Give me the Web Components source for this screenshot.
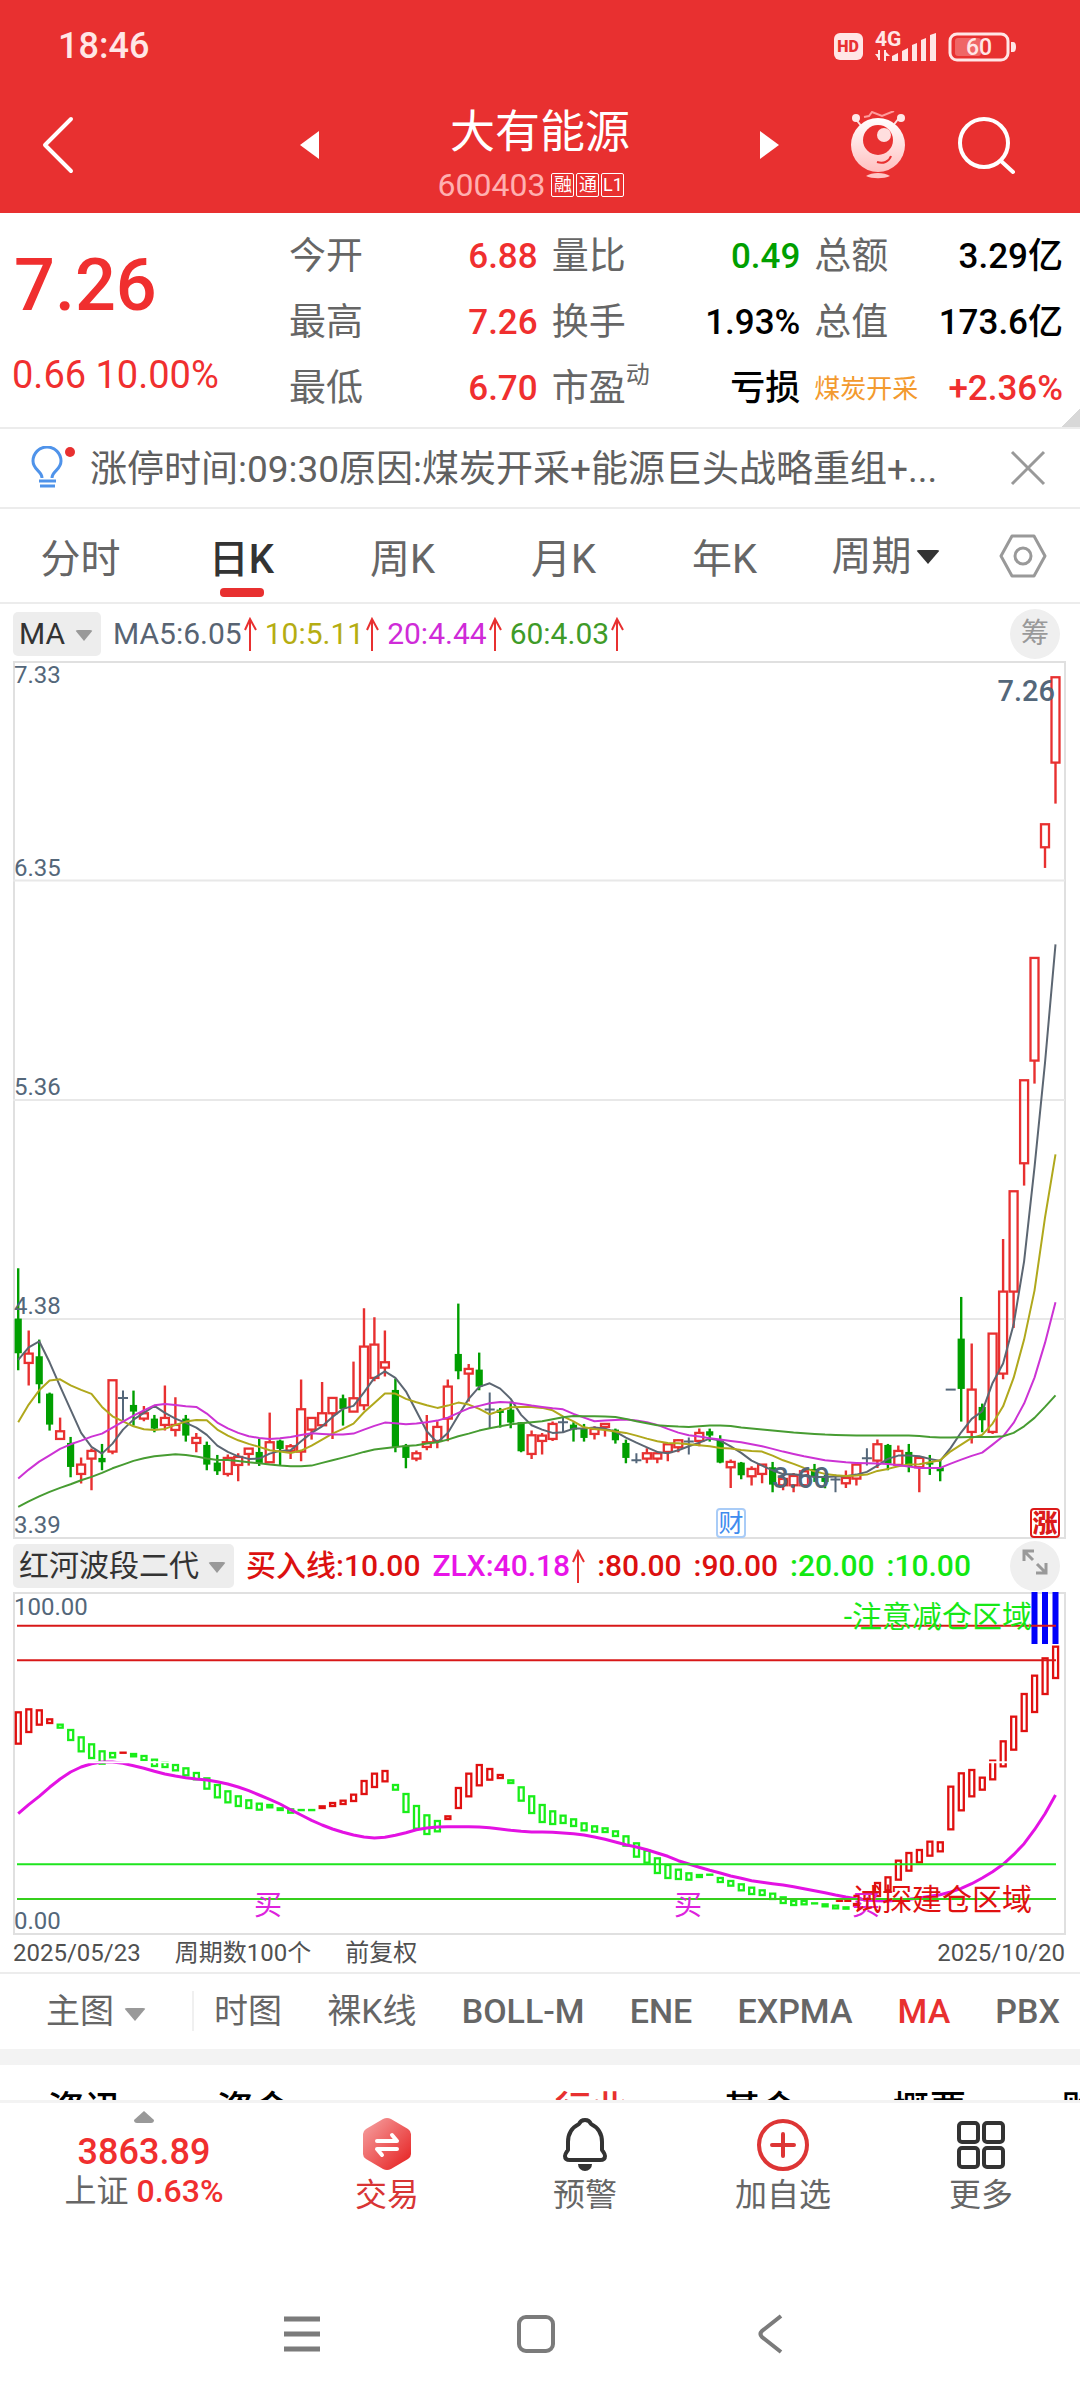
<!DOCTYPE html>
<html lang="zh-CN">
<head>
<meta charset="utf-8">
<meta name="viewport" content="width=device-width, initial-scale=1">
<title>大有能源 600403</title>
<style>
  :root {
    --red: #e83030;
    --up: #f02f2f;
    --down: #009f00;
    --ink: #333;
    --muted: #666;
    --faint: #999;
    --line: #ececec;
  }
  body {
    margin: 0;
    background: #fff;
    color: var(--ink);
    font-family: Roboto, "Noto Sans CJK SC", sans-serif;
  }
</style>
</head>
<body>
<stock-app></stock-app>

<template id="statusBar">
  <style>
    :host { display: flex; align-items: center; justify-content: space-between; height: 92px; padding: 0 64px 0 58px; color: #ffe6e6; }
    time { font-size: 36px; line-height: 40px; font-weight: 500; }
    svg { display: block; }
  </style>
  <time>18:46</time>
  <svg width="184" height="36" viewBox="0 0 184 36" fill="#ffe6e6" font-family="Roboto, sans-serif">
    <rect x="2" y="5" width="29" height="27" rx="6"/>
    <text x="16" y="24" text-anchor="middle" font-size="16" font-weight="900" fill="#e83030">HD</text>
    <text x="43" y="18" font-size="21" font-weight="700">4G</text>
    <path d="M46 32V22h2v10zM43 26h3v4zM52 22h2v11h-2zM54 24l4 4h-4zM60 33v-5l6-3v8zM70 33V23l6-3v13zM80 33V17l5-2v18zM89 33V12l5-2v23zM98 33V7l6-2v28z"/>
    <rect x="118" y="6" width="58" height="26" rx="7" fill="none" stroke="#ffe6e6" stroke-width="3"/>
    <rect x="123" y="10" width="26" height="18" rx="3" opacity=".3"/>
    <path d="M179 14h2q3 0 3 5t-3 5h-2z"/>
    <text x="147" y="27" text-anchor="middle" font-size="23" font-weight="500">60</text>
  </svg>
</template>

<template id="titleBar">
  <style>
    :host { display: grid; grid-template-columns: minmax(0, 5fr) minmax(0, 8fr) minmax(0, 5fr); align-items: center; height: 121px; color: #fff; }
    button { background: none; border: 0; padding: 0; color: inherit; cursor: pointer; }
    svg { display: block; }
    .back { justify-self: start; margin-top: -16px; margin-left: 42px; }
    .middle { display: flex; align-items: center; justify-content: space-between; }
    .middle > button { margin-top: -16px; }
    .name { text-align: center; }
    h1 { margin: 0 0 8px; font-size: 45px; line-height: 56px; font-weight: 400; }
    p { display: flex; align-items: center; justify-content: center; gap: 2px; margin: 0; padding-right: 18px; font-size: 32px; line-height: 32px; color: #ffb0b0; }
    i { box-sizing: border-box; width: 23px; height: 24px; border: 1px solid #fff; border-radius: 2px; color: #fff; font-size: 18px; line-height: 22px; font-style: normal; }
    i:first-of-type { margin-left: 4px; }
    .tools { display: flex; justify-content: flex-end; gap: 51px; padding-right: 65px; margin-top: -16px; }
  </style>
  <button class="back" aria-label="返回"><svg width="32" height="58" fill="none" stroke="#fff" stroke-width="4" stroke-linecap="round" stroke-linejoin="round"><path d="M29 3 3 29l26 26"/></svg></button>
  <div class="middle">
    <button aria-label="上一只"><svg width="20" height="28" fill="#fff"><path d="M19 0v28L0 14z"/></svg></button>
    <div class="name">
      <h1>大有能源</h1>
      <p>600403<i>融</i><i>通</i><i>L1</i></p>
    </div>
    <button aria-label="下一只"><svg width="20" height="28" fill="#fff"><path d="M0 0v28l19-14z"/></svg></button>
  </div>
  <div class="tools">
    <button aria-label="助手">
      <svg width="56" height="68" viewBox="0 0 56 68">
        <defs><linearGradient id="face" x1="0" y1="0" x2="0" y2="1"><stop stop-color="#fff"/><stop offset="1" stop-color="#ffc0c0"/></linearGradient></defs>
        <path d="m5 7 7 9M49 7l-7 9" stroke="#ffdede" stroke-width="2"/>
        <path d="m14 6 5-1 3-4 10 4 12-5" fill="none" stroke="#ff9c9c" stroke-width="2"/>
        <circle cx="6" cy="7" r="4" fill="#ffe8e8"/><circle cx="51" cy="7" r="4" fill="#ffe8e8"/>
        <circle cx="28" cy="34" r="27" fill="url(#face)"/>
        <circle cx="28" cy="29" r="15" fill="#e83030"/>
        <circle cx="34" cy="24" r="7" fill="#ffdede"/>
        <path d="M27 51c6 2 12 0 14-6" fill="none" stroke="#e83030" stroke-width="2"/>
        <path d="M16 65c6-4 18-4 24 0-6 3-18 3-24 0z" fill="#ffc6c6"/>
      </svg>
    </button>
    <button aria-label="搜索"><svg width="58" height="60" fill="none" stroke="#fff" stroke-width="4" stroke-linecap="round"><circle cx="27" cy="28" r="24"/><path d="m44 46 12 11"/></svg></button>
  </div>
</template>

<template id="quoteItem">
  <style>
    :host { display: flex; align-items: center; justify-content: space-between; line-height: 66px; white-space: nowrap; color: #000; }
    dt { font-size: 37px; color: var(--muted); }
    dd { margin: 0; font-size: 35px; font-weight: 500; }
    :host([tone="up"]) dd { color: var(--up); }
    :host([tone="down"]) dd { color: var(--down); }
    :host([tag]) dt { font-size: 26px; color: #f39a2e; }
    ::slotted(sup) { font-size: 24px; line-height: 24px; vertical-align: 18px; }
    dl { display: contents; }
  </style>
  <dl><dt><slot name="label"></slot></dt><dd><slot></slot></dd></dl>
</template>

<template id="quotePanel">
  <style>
    :host { display: grid; grid-template-columns: 261px repeat(3, minmax(0, 1fr)); column-gap: 14px; padding: 11px 17px 5px 14px; border-bottom: 2px solid var(--line);
      background: linear-gradient(135deg, transparent 50%, #d8d8d8 50%) right bottom / 18px 18px no-repeat; }
    .price { grid-row: span 3; color: var(--up); }
    b { display: block; padding-top: 20px; font-size: 72px; line-height: 84px; font-weight: 500; }
    p { margin: 27px 0 0 -2px; font-size: 38px; line-height: 40px; }
  </style>
  <div class="price"><b>7.26</b><p>0.66 10.00%</p></div>
  <quote-item tone="up"><span slot="label">今开</span>6.88</quote-item>
  <quote-item tone="down"><span slot="label">量比</span>0.49</quote-item>
  <quote-item><span slot="label">总额</span>3.29亿</quote-item>
  <quote-item tone="up"><span slot="label">最高</span>7.26</quote-item>
  <quote-item><span slot="label">换手</span>1.93%</quote-item>
  <quote-item><span slot="label">总值</span>173.6亿</quote-item>
  <quote-item tone="up"><span slot="label">最低</span>6.70</quote-item>
  <quote-item><span slot="label">市盈</span><sup slot="label">动</sup>亏损</quote-item>
  <quote-item tone="up" tag><span slot="label">煤炭开采</span>+2.36%</quote-item>
</template>

<template id="tipBar">
  <style>
    :host { display: flex; align-items: center; height: 78px; padding: 0 34px 0 31px; border-bottom: 2px solid var(--line); }
    p { flex: 1; margin: 0 50px 0 14px; padding-top: 3px; font-size: 37px; line-height: 48px; color: #606060; white-space: nowrap; overflow: hidden; text-overflow: ellipsis; }
    button { background: none; border: 0; padding: 0; cursor: pointer; }
    svg { display: block; }
  </style>
  <svg width="45" height="44" fill="none" stroke="#4f93ea" stroke-width="3"><path d="M11 32c0-7-9-8-9-17a14 14 0 0 1 28 0c0 9-9 10-9 17M8 35h17M9 40h15"/><circle cx="39" cy="6" r="5" fill="#e83030" stroke="none"/></svg>
  <p>涨停时间:09:30原因:煤炭开采+能源巨头战略重组+...</p>
  <button aria-label="关闭"><svg width="36" height="36" fill="none" stroke="#999" stroke-width="3"><path d="m2 2 32 32M34 2 2 34"/></svg></button>
</template>

<template id="pickList">
  <style>
    :host { display: inline-grid; align-items: center; border-radius: 5px; font-size: 30px; line-height: 44px; }
    select { grid-area: 1 / 1; appearance: none; border: 0; margin: 0; padding: 0 35px 0 6px; background: none; color: inherit; font: inherit; outline: none; }
    span { grid-area: 1 / 1; justify-self: end; margin-right: 8px; margin-top: 4px; border: solid transparent; border-width: 11px 9px 0; border-top-color: var(--pick-arrow, #999); border-radius: 3px; pointer-events: none; }
    :host([boxed]) { background: #ededed; }
    :host([large]) select { padding-right: 28px; padding-left: 0; }
    :host([large]) span { margin: 0; border-width: 14px 12px 0; }
    :host([menu]) select { padding-right: 32px; padding-left: 0; }
    :host([menu]) span { margin: 8px 0 0; border-width: 13px 11px 0; }
  </style>
  <select><option></option></select><span></span>
</template>

<template id="periodTabs">
  <style>
    :host { display: grid; grid-template-columns: repeat(6, minmax(0, 161fr)) minmax(0, 114fr); height: 93px; border-bottom: 2px solid var(--line); color: var(--muted); font-size: 40px; }
    button { position: relative; border: 0; padding: 0; background: none; color: inherit; font: inherit; cursor: pointer; }
    .on { color: var(--ink); font-weight: 500; }
    .on::after { content: ""; position: absolute; left: calc(50% - 22px); bottom: 5px; width: 44px; height: 9px; border-radius: 4px; background: var(--red); }
    pick-list { justify-self: center; align-self: center; padding-top: 3px; --pick-arrow: #333; font-size: 40px; line-height: 60px; }
    svg { display: block; margin: 0 auto; }
  </style>
  <button>分时</button><button class="on">日K</button><button>周K</button><button>月K</button><button>年K</button>
  <pick-list large value="周期"></pick-list>
  <button aria-label="设置"><svg width="48" height="44" fill="none" stroke="#999" stroke-width="3" stroke-linejoin="round"><path d="M13 2h22l11 20-11 20H13L2 22z"/><circle cx="24" cy="22" r="8"/></svg></button>
</template>

<template id="indicatorBar">
  <style>
    :host { display: flex; align-items: center; height: 55px; padding: 0 20px 0 13px; font-size: 30px; line-height: 44px; white-space: nowrap; }
    .values { display: flex; flex: 1; align-items: center; gap: var(--gap, 11px); margin-left: 12px; font-weight: var(--weight, 400); }
    .values span { display: flex; align-items: center; gap: 2px; }
    button { width: 50px; height: 50px; border: 0; border-radius: 50%; padding: 0; background: #efefef; color: var(--faint); font: inherit; font-size: 28px; cursor: pointer; }
    svg { display: block; margin: 0 auto; }
  </style>
  <pick-list boxed></pick-list>
  <div class="values"></div>
  <button><slot></slot></button>
</template>

<template id="chart">
  <style>
    :host { display: block; margin: 0 15px 0 13px; }
    svg { display: block; width: 100%; height: auto; overflow: visible; font-family: Roboto, "Noto Sans CJK SC", sans-serif; }
  </style>
</template>

<template id="dateRow">
  <style>
    :host { display: flex; gap: 34px; padding: 0 15px 0 13px; font-size: 24px; line-height: 38px; color: #505050; border-bottom: 2px solid var(--line); }
    time:last-child { margin-left: auto; }
  </style>
  <time>2025/05/23</time><span>周期数100个</span><span>前复权</span><time>2025/10/20</time>
</template>

<template id="overlayTabs">
  <style>
    :host { display: flex; align-items: center; height: 73px; padding: 0 0 2px 46px; border-bottom: 16px solid #f3f3f3; color: var(--muted); font-size: 34px; white-space: nowrap; overflow: hidden; }
    pick-list { font-size: 34px; line-height: 48px; }
    nav { display: flex; flex: 1; justify-content: space-between; margin-left: 46px; padding: 0 20px; border-left: 2px solid #f0f0f0; }
    button { border: 0; padding: 0; background: none; color: inherit; font: inherit; font-weight: 500; line-height: 40px; cursor: pointer; }
    .cjk { font-weight: 400; }
    .on { color: var(--red); }
  </style>
  <pick-list menu value="主图"></pick-list>
  <nav><button class="cjk">时图</button><button class="cjk">裸K线</button><button>BOLL-M</button><button>ENE</button><button>EXPMA</button><button class="on">MA</button><button>PBX</button></nav>
</template>

<template id="infoTabs">
  <style>
    :host { display: grid; grid-template-columns: repeat(7, 169px); padding-top: 22px; color: #000; overflow: hidden; }
    button { border: 0; padding: 0; background: none; color: inherit; font: inherit; font-size: 37px; font-weight: 500; line-height: 48px; white-space: nowrap; }
    .on { color: var(--red); }
  </style>
  <button>资讯</button><button>资金</button><button></button><button class="on">行业</button><button>基金</button><button>概要</button><button>财务</button>
</template>

<template id="toolBar">
  <style>
    :host { display: grid; grid-template-columns: minmax(0, 288fr) repeat(4, minmax(0, 198fr)); height: 132px; border-top: 3px solid #f3f3f3; background: #fff; color: var(--muted); font-size: 32px; line-height: 38px; }
    button { display: flex; flex-direction: column; align-items: center; border: 0; padding: 13px 0 0; background: none; color: inherit; font: inherit; cursor: pointer; }
    button svg { margin-bottom: 4px; }
    .index { padding-top: 8px; }
    .index svg { margin-bottom: 9px; }
    .index b { font-size: 36px; font-weight: 500; line-height: 40px; color: var(--up); }
    .index em { font-style: normal; font-weight: 500; color: var(--up); }
    .trade { color: #d83535; }
  </style>
  <button class="index">
    <svg width="20" height="12" fill="#999"><path d="M10 0 20 9q0 3-3 3H3q-3 0-3-3z"/></svg>
    <b>3863.89</b><span>上证 <em>0.63%</em></span>
  </button>
  <button class="trade">
    <svg width="56" height="56" viewBox="0 0 56 56">
      <defs><linearGradient id="hex" x1="0" y1="0" x2="1" y2="1"><stop stop-color="#f6a5a5"/><stop offset=".85" stop-color="#e83030"/></linearGradient></defs>
      <path d="M24 3q4-2 8 0l17 10q3 2 3 5v20q0 3-3 5L32 53q-4 2-8 0L7 43q-3-2-3-5V18q0-3 3-5z" fill="url(#hex)"/>
      <path d="M18 25h20l-5-6M38 33H18l5 6" fill="none" stroke="#fff" stroke-width="4" stroke-linecap="round" stroke-linejoin="round"/>
    </svg>交易
  </button>
  <button>
    <svg width="56" height="56" viewBox="0 0 56 56" fill="none" stroke="#333" stroke-width="4" stroke-linejoin="round"><path d="M22 8a6.500 6.500 0 0 1 12 0c8 4 11 10 11 18v8c2 3 3 4 3 6q0 4-5 4H13q-5 0-5-4c0-2 1-3 3-6v-8c0-8 3-14 11-18z"/><path d="M21 48h14a7 7 0 0 1-14 0z" fill="#333" stroke="none"/></svg>预警
  </button>
  <button>
    <svg width="56" height="56" viewBox="0 0 56 56" fill="none" stroke="#dd3535" stroke-width="4" stroke-linecap="round"><circle cx="28" cy="29" r="24"/><path d="M28 18v22M17 29h22"/></svg>加自选
  </button>
  <button>
    <svg width="56" height="56" viewBox="0 0 56 56" fill="none" stroke="#333" stroke-width="4"><rect x="6" y="7" width="19" height="19" rx="3"/><rect x="31" y="7" width="19" height="19" rx="3"/><rect x="6" y="32" width="19" height="19" rx="3"/><rect x="31" y="32" width="19" height="19" rx="3"/></svg>更多
  </button>
</template>

<template id="systemNav">
  <style>
    :host { display: flex; align-items: center; justify-content: center; gap: 194px; height: 132px; padding-right: 8px; background: #fff; }
    button { border: 0; padding: 0; background: none; }
    svg { display: block; }
  </style>
  <button aria-label="最近任务"><svg width="40" height="40" fill="none" stroke="#7b7b7b" stroke-width="5"><path d="M2 5h36M2 20h36M2 35h36"/></svg></button>
  <button aria-label="主屏幕"><svg width="40" height="40" fill="none" stroke="#7b7b7b" stroke-width="4"><rect x="3" y="3" width="34" height="34" rx="7"/></svg></button>
  <button aria-label="返回"><svg width="40" height="40" fill="none" stroke="#7b7b7b" stroke-width="4"><path d="M31 2 12 17q-3 3 0 6l19 15"/></svg></button>
</template>

<template id="app">
  <style>
    :host { display: flex; flex-direction: column; height: 100vh; overflow: hidden; }
    header { background: var(--red); }
    main { flex: 1; min-height: 0; overflow: hidden; }
    .price { padding-top: 2px; --gap: 8px; }
    .wave { --weight: 500; --gap: 12px; }
    system-nav { margin-top: 33px; }
  </style>
  <header><status-bar></status-bar><title-bar></title-bar></header>
  <main>
    <quote-panel></quote-panel>
    <tip-bar></tip-bar>
    <period-tabs></period-tabs>
    <indicator-bar class="price" name="MA" values="MA5:6.05^ #586473|10:5.11^ #b5ad12|20:4.44^ #cf2bd8|60:4.03^ #3f9b28">筹</indicator-bar>
    <price-chart></price-chart>
    <indicator-bar class="wave" name="红河波段二代" values="买入线:10.00 #dc1010|ZLX:40.18^ #e815e8|:80.00 #dc1010|:90.00 #dc1010|:20.00 #12e812|:10.00 #12e812"><svg width="26" height="26" fill="none" stroke="#999" stroke-width="3"><path d="M2 12V2h10M2 2l9 9M24 14v10H14M24 24l-9-9"/></svg></indicator-bar>
    <wave-chart></wave-chart>
    <date-row></date-row>
    <overlay-tabs></overlay-tabs>
    <info-tabs></info-tabs>
  </main>
  <tool-bar></tool-bar>
  <system-nav></system-nav>
</template>

<script>
  class Part extends HTMLElement {
    constructor() {
      super();
      const t = document.getElementById(this.constructor.template);
      this.attachShadow({mode: 'open'}).appendChild(t.content.cloneNode(true));
    }
  }

  const part = (tag, template) => customElements.define(tag, class extends Part {
    static get template() { return template; }
  });

  class PickList extends Part {
    static get template() { return 'pickList'; }
    static get observedAttributes() { return ['value']; }

    attributeChangedCallback(name, oldValue, newValue) {
      this.shadowRoot.querySelector('option').textContent = newValue;
      this.shadowRoot.querySelector('select').setAttribute('aria-label', newValue);
    }
  }

  // values: "text #colour" split by "|", a "^" after the text adds the rising arrow
  class IndicatorBar extends Part {
    static get template() { return 'indicatorBar'; }

    connectedCallback() {
      this.shadowRoot.querySelector('pick-list').setAttribute('value', this.getAttribute('name'));
      const arrow = '<svg width="13" height="34" fill="none" stroke="#e83030" stroke-width="2"><path d="M6 34V2M1 13 6 2l6 11"/></svg>';
      this.shadowRoot.querySelector('.values').innerHTML = this.getAttribute('values').split('|').map(v => {
        const [text, color] = v.split(' ');
        return `<span style="color:${color}">${text.replace('^', arrow)}</span>`;
      }).join('');
    }
  }

  const STEP = 1037.3 / 99;
  const x = i => (5.2 + i * STEP).toFixed(1);
  const line = (values, y, color, width) =>
    `<polyline fill="none" stroke="${color}" stroke-width="${width}" stroke-linejoin="round" points="${values.map((v, i) => x(i) + ',' + y(v).toFixed(1)).join(' ')}"/>`;
  const text = (tx, ty, str, attrs) => `<text x="${tx}" y="${ty}" ${attrs}>${str}</text>`;

  // kind, body top, body bottom, high, low; in thirds of a unit below the 4.73 level
  const CANDLES = `G237,341,86,392 R342,370,273,438 G350,434,300,491 G462,555,459,573 R575,598,534,598 G610,682,592,713 R675,703,654,732 R634,657,627,752 G655,668,613,692 R422,636,422,644
    D475,475,453,541 G496,516,453,558 R521,537,499,545 G537,567,526,578 R535,556,438,573 R556,571,473,591 G537,588,526,606 R595,610,580,638 G616,675,606,692 G669,695,646,706
    R655,703,645,711 R652,676,641,725 R627,643,627,678 G637,670,598,679 R608,668,519,668 G603,628,600,679 R620,634,613,658 R509,636,420,665 R535,570,535,600 R521,557,427,560
    R475,521,473,598 G476,508,465,558 R476,516,366,516 R321,497,206,512 R315,415,233,425 R368,384,273,411 G451,622,417,638 G618,655,613,686 R641,657,633,665 R608,622,526,632
    R562,604,545,626 R441,537,420,605 G343,395,192,419 R388,402,373,486 G390,441,339,452 D510,510,459,566 G510,520,505,564 G510,549,486,566 G548,635,548,638 R587,643,573,658
    R588,604,580,645 R553,598,546,604 D548,548,535,580 G555,570,548,606 G568,595,553,606 R568,583,560,600 R553,562,553,591 G570,602,567,612 G610,655,600,671 D662,662,641,671
    R641,657,626,671 R641,657,634,671 R614,637,612,665 R602,623,600,638 D606,606,594,645 R580,604,567,620 G575,588,567,606 G602,669,587,671 R667,683,660,745 G669,707,667,719
    R688,710,680,738 R675,703,675,731 G683,735,667,758 R718,737,700,752 R709,737,700,758 R695,737,690,740 G688,710,673,727 G712,727,705,746 D720,720,705,758 R715,731,693,745
    R675,717,672,738 D656,656,626,678 R614,663,600,685 G616,672,613,692 R634,676,618,680 G637,680,613,698 R655,683,652,758 G668,675,646,706 G683,695,660,725 D450,450,450,450
    G297,448,172,546 R450,577,312,612 G502,542,492,578 R282,577,282,583 R156,402,-2,419 R-145,156,-145,265 R-478,-229,-478,-162 R-845,-537,-845,-468 R-1246,-1177,-1246,-1115 R-1687,-1431,-1687,-1308`;

  const MA5 = [361,323,305,368,440,510,580,622,642,612,570,540,520,499,520,537,550,564,586,618,637,650,658,657,642,634,632,605,580,560,532,508,499,458,415,395,415,455,515,575,609,580,528,478,442,431,447,478,526,557,570,580,578,567,567,564,567,576,594,609,623,637,641,632,620,609,597,603,620,640,663,678,692,704,704,708,712,712,711,710,705,697,678,658,648,648,650,658,664,625,578,538,515,430,372,255,65,-217,-530,-886];
  const MA10 = [548,495,452,423,419,437,451,463,502,530,545,560,569,571,568,556,546,541,542,570,588,602,613,622,632,636,640,633,618,600,582,568,552,518,490,462,462,478,488,497,505,498,489,495,508,524,513,503,502,502,505,512,530,545,563,568,571,576,580,588,597,605,610,611,614,617,620,625,627,631,634,636,648,662,673,685,695,703,707,709,708,705,694,688,680,675,674,668,662,635,615,595,586,552,500,415,300,153,-66,-256];
  const MA20 = [717,690,666,647,628,614,603,591,582,564,546,528,512,497,493,496,500,502,522,549,566,580,590,595,598,596,592,586,581,583,585,585,582,570,559,549,551,554,552,548,543,534,520,506,499,491,487,489,493,498,502,506,509,523,534,545,543,541,540,543,548,556,568,579,587,591,596,600,604,608,614,620,628,636,643,650,656,662,665,668,670,671,672,673,677,681,685,685,685,672,660,649,639,615,590,550,492,414,310,188];
  const MA60 = [802,785,770,757,745,734,722,712,700,686,675,664,656,650,647,644,646,651,657,661,661,664,668,671,675,678,680,680,678,670,662,654,646,637,630,626,622,619,617,612,608,600,590,582,573,566,560,554,551,548,545,539,533,529,530,530,531,532,538,545,551,557,559,561,562,560,558,558,559,564,567,570,573,576,579,581,583,585,586,587,588,588,588,588,588,588,589,592,594,594,593,592,592,592,590,580,560,535,502,467];

  class PriceChart extends Part {
    static get template() { return 'chart'; }

    connectedCallback() {
      const y = v => 578.6 + v / 3;
      let out = '<rect x="1" y="1" width="1051" height="876" fill="none" stroke="#e0e0e0" stroke-width="2"/>'
        + '<path d="M0 219.500h1052M0 439h1052M0 658h1052" stroke="#e8e8e8" stroke-width="2"/>';
      CANDLES.split(/\s+/).forEach((c, i) => {
        const [top, bottom, high, low] = c.slice(1).split(',').map(v => y(+v));
        const cx = +x(i);
        if (c[0] === 'G') {
          out += `<path d="M${cx} ${high}V${low}" stroke="#009f00" stroke-width="2.400"/><rect x="${cx - 3.6}" y="${top}" width="7.200" height="${bottom - top}" fill="#009f00"/>`;
        } else if (c[0] === 'R') {
          out += `<path d="M${cx} ${high}V${top}M${cx} ${bottom}V${low}" stroke="#e83030" stroke-width="2.400"/><rect x="${cx - 4}" y="${top}" width="8" height="${bottom - top}" fill="none" stroke="#e83030" stroke-width="2.300"/>`;
        } else {
          out += `<path d="M${cx - 5} ${top}h10M${cx} ${high}V${low}" stroke="#54677a" stroke-width="2"/>`;
        }
      });
      out += line(MA5, y, '#5c6672', 2) + line(MA10, y, '#b0a81c', 2) + line(MA20, y, '#cc33d4', 2) + line(MA60, y, '#479c32', 2);
      const axis = 'font-size="24" fill="#54677a"';
      [['7.33', 22], ['6.35', 215], ['5.36', 434], ['4.38', 653], ['3.39', 872]].forEach(([s, ty]) => { out += text(1, ty, s, axis); });
      out += text(1042, 40, '7.26', 'font-size="29" font-weight="500" text-anchor="end" fill="#54677a"');
      out += text(788, 827, '3.60', 'font-size="29" font-weight="500" text-anchor="middle" fill="#54677a"');
      out += '<rect x="704" y="848" width="28" height="28" rx="3" fill="#fff" stroke="#a9ccf7" stroke-width="2"/>' + text(718, 871, '财', 'font-size="25" text-anchor="middle" fill="#3f8cee"');
      out += '<rect x="1018" y="848" width="28" height="28" rx="3" fill="#fff" stroke="#dc1a1a" stroke-width="2"/>' + text(1032, 871, '涨', 'font-size="25" font-weight="900" text-anchor="middle" fill="#dc1a1a"');
      this.shadowRoot.innerHTML += `<svg viewBox="0 0 1052 877">${out}</svg>`;
    }
  }

  // kind, top, bottom; thirds of a unit, the frame starts at 160
  const BARS = `R515,615 R506,580 R509,558 R536,553 G552,567 G568,604 G590,638 G611,658 G632,675 G637,656 R636,641 G640,653 G646,664 G657,682 G665,685 G673,695 G683,710 G697,722 G713,750 G733,776
    G752,791 G767,802 G779,808 G789,813 G793,806 G803,814 G806,822 G808,813 G808,813 R797,808 R787,802 R780,796 R762,787 R721,766 R699,745 R691,728 G733,753 G760,820 G796,870 G824,886
    G841,878 R827,841 R742,808 R699,773 R673,740 R685,723 R703,718 G719,733 G740,786 G767,823 G793,850 G812,856 G825,853 G836,862 G848,875 G857,879 G863,880 G872,892 G887,921 G908,954
    G930,972 G953,1003 G973,1018 G987,1021 G998,1023 G1003,1015 G1002,1007 G1012,1030 G1021,1041 G1031,1055 G1041,1066 G1049,1069 G1059,1081 G1070,1093 G1081,1099 G1081,1097 G1088,1093 G1091,1103 G1095,1109 G1100,1110
    R1090,1101 R1060,1085 R1027,1072 R1010,1055 R960,1023 R937,996 R928,971 R903,951 R905,938 R738,872 R698,815 R688,773 R711,753 R660,722 R602,683 R528,633 R460,577 R405,520 R353,466 R318,418`;
  const ZLX = [822,795,770,743,718,697,682,672,667,667,671,678,686,695,703,709,714,718,721,726,733,742,753,766,779,793,810,826,842,856,868,878,886,892,895,893,887,879,870,865,862,861,861,861,862,864,868,872,875,877,877,878,880,882,886,892,899,907,915,922,930,940,950,963,973,983,992,1000,1009,1016,1023,1028,1032,1036,1041,1047,1053,1059,1066,1072,1077,1081,1083,1084,1082,1079,1075,1070,1065,1057,1046,1032,1015,996,974,945,912,870,822,766];

  class WaveChart extends Part {
    static get template() { return 'chart'; }

    connectedCallback() {
      const y = v => (v - 160) / 3;
      let out = '<rect x="1" y="0" width="1051" height="341" fill="none" stroke="#e0e0e0" stroke-width="2"/>';
      [97, 98, 99].forEach(i => { out += `<rect x="${x(i) - 3}" y="-1" width="6" height="52" fill="#0000fa"/>`; });
      BARS.split(/\s+/).forEach((b, i) => {
        const [top, bottom] = b.slice(1).split(',').map(v => y(+v));
        const color = b[0] === 'R' ? '#e01010' : '#19ee19';
        out += `<rect x="${x(i) - 2.400}" y="${top + 1}" width="5" height="${Math.max(bottom - top - 2, 0.1)}" fill="none" stroke="${color}" stroke-width="2.300"/>`;
      });
      out += line(ZLX, y, '#e312e3', 3);
      out += `<path d="M5 ${y(668)}H1042" stroke="#fff" stroke-width="2"/>`;
      [[258, '#d81818'], [362, '#d81818'], [974, '#1fe51f'], [1078, '#35cf1c']].forEach(([v, c]) => {
        out += `<path d="M4 ${y(v)}H1043" stroke="${c}" stroke-width="2"/>`;
      });
      out += text(1, 22, '100.00', 'font-size="24" fill="#54677a"') + text(1, 336, '0.00', 'font-size="24" fill="#54677a"');
      [255, 675, 853].forEach(tx => { out += text(tx, 322, '买', 'font-size="28" text-anchor="middle" fill="#dd22dd"'); });
      out += text(1019, 34, '-注意减仓区域', 'font-size="30" text-anchor="end" fill="#16e816"');
      out += text(1019, 317, '--试探建仓区域', 'font-size="30" text-anchor="end" fill="#e01010"');
      this.shadowRoot.innerHTML += `<svg viewBox="0 0 1052 341">${out}</svg>`;
    }
  }

  customElements.define('pick-list', PickList);
  customElements.define('indicator-bar', IndicatorBar);
  customElements.define('price-chart', PriceChart);
  customElements.define('wave-chart', WaveChart);
  part('status-bar', 'statusBar');
  part('title-bar', 'titleBar');
  part('quote-item', 'quoteItem');
  part('quote-panel', 'quotePanel');
  part('tip-bar', 'tipBar');
  part('period-tabs', 'periodTabs');
  part('date-row', 'dateRow');
  part('overlay-tabs', 'overlayTabs');
  part('info-tabs', 'infoTabs');
  part('tool-bar', 'toolBar');
  part('system-nav', 'systemNav');
  part('stock-app', 'app');
</script>
</body>
</html>
